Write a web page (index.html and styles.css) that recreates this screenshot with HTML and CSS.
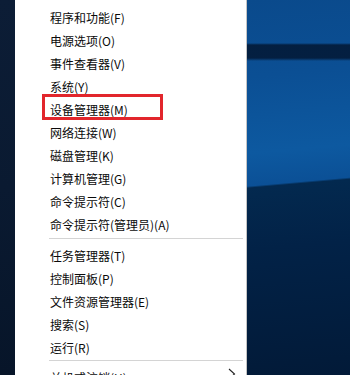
FILE: index.html
```html
<!DOCTYPE html>
<html lang="zh-CN">
<head>
<meta charset="utf-8">
<title>Win+X 菜单</title>
<link rel="stylesheet" href="styles.css">
</head>
<body>
<div class="screen">
  <div class="strip"></div>
  <div class="menu">
    <ul class="group">
      <li class="item">程序和功能(F)</li>
      <li class="item">电源选项(O)</li>
      <li class="item">事件查看器(V)</li>
      <li class="item">系统(Y)</li>
      <li class="item marked">设备管理器(M)<span class="mark"></span></li>
      <li class="item">网络连接(W)</li>
      <li class="item">磁盘管理(K)</li>
      <li class="item">计算机管理(G)</li>
      <li class="item">命令提示符(C)</li>
      <li class="item">命令提示符(管理员)(A)</li>
    </ul>
    <div class="sep"></div>
    <ul class="group">
      <li class="item">任务管理器(T)</li>
      <li class="item">控制面板(P)</li>
      <li class="item">文件资源管理器(E)</li>
      <li class="item">搜索(S)</li>
      <li class="item">运行(R)</li>
    </ul>
    <div class="sep sep2"></div>
    <ul class="group">
      <li class="item sub">关机或注销(U)<svg class="chev" width="8" height="12" viewBox="0 0 8 12"><path d="M1 1 L6.5 6 L1 11" fill="none" stroke="#222" stroke-width="1.1"/></svg></li>
    </ul>
  </div>
  <div class="wall"></div>
</div>
</body>
</html>
```

FILE: styles.css
```css
html, body {
  margin: 0;
  padding: 0;
  overflow: hidden;
}

.screen {
  display: flex;
  width: 350px;
  height: 375px;
  overflow: hidden;
}

.strip {
  width: 15px;
  flex: none;
  background: linear-gradient(to bottom, #0c1d36 0%, #0a1a31 50%, #071529 100%);
}

.menu {
  width: 232px;
  flex: none;
  box-sizing: border-box;
  background: #ffffff;
  border-right: 1px solid #c4c4c4;
  padding-top: 6px;
  font-family: "Noto Sans CJK SC", "Noto Sans", sans-serif;
  font-size: 12px;
  color: #0a0a0a;
}

.group {
  list-style: none;
  margin: 0;
  padding: 0;
}

.item {
  position: relative;
  height: 23px;
  line-height: 23px;
  padding-left: 35px;
  white-space: nowrap;
}

.item.sub {
  display: flex;
  justify-content: space-between;
  align-items: flex-start;
  padding-right: 10px;
}

.chev {
  margin-top: 2px;
}

.mark {
  position: absolute;
  left: 27px;
  top: -4px;
  width: 121px;
  height: 26px;
  box-sizing: border-box;
  border: 3px solid #e2262c;
}

.sep {
  height: 1px;
  margin: 2px 3px 5px 34px;
  background: #d4d4d4;
}

.sep2 {
  margin-top: 1px;
}

.wall {
  flex: 1;
  background:
    linear-gradient(to bottom, transparent 43px, rgba(3, 26, 56, 0.9) 45px, rgba(3, 26, 56, 0.9) 58px, transparent 61px),
    linear-gradient(175deg, #0a4a8c 0%, #0b4f94 20%, #0d59a0 40%, #0b5096 48.5%, #03294f 49%, #022247 65%, #021a38 100%);
}
```
